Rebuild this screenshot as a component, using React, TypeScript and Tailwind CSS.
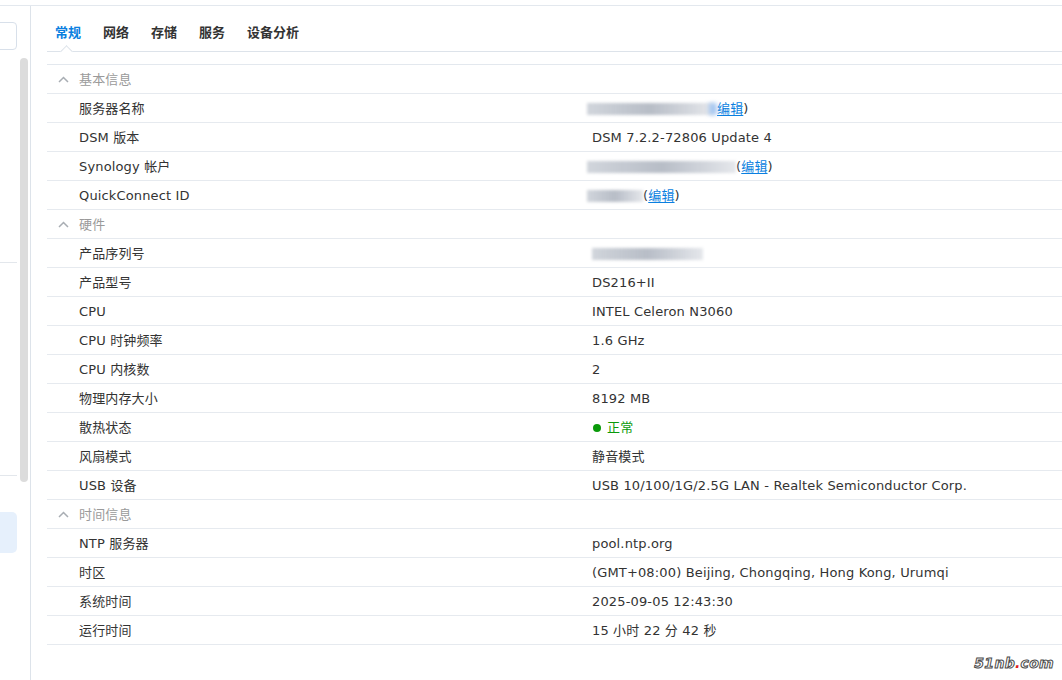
import React from 'react'

type Row = {
  label: string
  value?: React.ReactNode
}

type Section = {
  title: string
  rows: Row[]
}

function Blur({ w, className = '' }: { w: number; className?: string }) {
  return (
    <span
      className={`inline-block h-[12px] align-middle bg-gradient-to-r from-gray-300 via-gray-400/70 to-gray-200 blur-[1.5px] ${className}`}
      style={{ width: w }}
    />
  )
}

function Edit({ open = true }: { open?: boolean }) {
  return (
    <span>
      {open && '('}
      <span className="text-[#0a7fe0] underline underline-offset-2">编辑</span>)
    </span>
  )
}

const sections: Section[] = [
  {
    title: '基本信息',
    rows: [
      {
        label: '服务器名称',
        value: (
          <span className="flex items-center -ml-[5px]">
            <Blur w={126} />
            <span className="inline-block w-[8px] h-[12px] bg-[#a8c8f0] blur-[2px] -ml-[4px]" />
            <Edit open={false} />
          </span>
        ),
      },
      { label: 'DSM 版本', value: 'DSM 7.2.2-72806 Update 4' },
      {
        label: 'Synology 帐户',
        value: (
          <span className="flex items-center -ml-[5px]">
            <Blur w={149} />
            <Edit />
          </span>
        ),
      },
      {
        label: 'QuickConnect ID',
        value: (
          <span className="flex items-center -ml-[5px]">
            <Blur w={56} />
            <Edit />
          </span>
        ),
      },
    ],
  },
  {
    title: '硬件',
    rows: [
      { label: '产品序列号', value: <Blur w={111} /> },
      { label: '产品型号', value: 'DS216+II' },
      { label: 'CPU', value: 'INTEL Celeron N3060' },
      { label: 'CPU 时钟频率', value: '1.6 GHz' },
      { label: 'CPU 内核数', value: '2' },
      { label: '物理内存大小', value: '8192 MB' },
      {
        label: '散热状态',
        value: (
          <span className="flex items-center gap-[6px] text-[#0a9a0a]">
            <span className="w-[8px] h-[8px] rounded-full bg-[#0a9a0a] ml-[1px]" />
            正常
          </span>
        ),
      },
      { label: '风扇模式', value: '静音模式' },
      { label: 'USB 设备', value: 'USB 10/100/1G/2.5G LAN - Realtek Semiconductor Corp.' },
    ],
  },
  {
    title: '时间信息',
    rows: [
      { label: 'NTP 服务器', value: 'pool.ntp.org' },
      { label: '时区', value: '(GMT+08:00) Beijing, Chongqing, Hong Kong, Urumqi' },
      { label: '系统时间', value: '2025-09-05 12:43:30' },
      { label: '运行时间', value: '15 小时 22 分 42 秒' },
    ],
  },
]

const tabs = ['常规', '网络', '存储', '服务', '设备分析']

function Chevron() {
  return (
    <svg width="11" height="7" viewBox="0 0 11 7" fill="none" className="ml-[11px] mr-[10px]">
      <path d="M1 6l4.5-4.5L10 6" stroke="#a8adb3" strokeWidth="1.5" />
    </svg>
  )
}

export default function App() {
  return (
    <div
      className="w-[1062px] h-[680px] overflow-hidden bg-white text-[#333] relative"
      style={{ fontFamily: '"DejaVu Sans", "Noto Sans CJK SC", sans-serif' }}
    >
      <div className="h-[6px] border-b border-[#e3e8ee]" />
      <div className="flex h-[674px]">
        {/* Left panel */}
        <div className="w-[31px] shrink-0 border-r border-[#dde3ea] relative">
          <div className="absolute left-[-6px] top-[16px] w-[23px] h-[28px] border border-[#d8e0ea] rounded-[4px]" />
          <div className="absolute left-[20px] top-[52px] w-[8px] h-[424px] rounded-[4px] bg-[#dcdcdc]" />
          <div className="absolute left-0 top-[256px] w-[17px] border-t border-[#e3e7ec]" />
          <div className="absolute left-0 top-[469px] w-[17px] border-t border-[#e3e7ec]" />
          <div className="absolute left-[-6px] top-[506px] w-[23px] h-[41px] rounded-[5px] bg-[#e6f0fc]" />
        </div>

        {/* Main */}
        <div className="flex-1 pl-[16px] min-w-0">
          <div className="relative h-[46px] border-b border-[#dde3ea] flex items-end gap-[22px] pl-[8px] pb-[9px] text-[13px] leading-[18px] font-bold">
            {tabs.map((t, i) => (
              <span key={t} className={i === 0 ? 'text-[#0a7fe0]' : 'text-[#333]'}>
                {t}
              </span>
            ))}
            <span className="absolute left-[15px] bottom-[-5px] w-[9px] h-[9px] rotate-45 bg-white border-l border-t border-[#dde3ea]" />
          </div>

          <div className="mt-[12px] border-t border-[#e3e8ee] text-[13px] tracking-[0.15px]">
            {sections.map((s) => (
              <div key={s.title}>
                <div className="h-[29px] pt-[1px] flex items-center border-b border-[#e6eaef] text-[#9a9a9a]">
                  <Chevron />
                  <span>{s.title}</span>
                </div>
                {s.rows.map((r) => (
                  <div key={r.label} className="h-[29px] pt-[2px] grid grid-cols-[545px_1fr] items-center border-b border-[#e6eaef]">
                    <span className="pl-[32px] whitespace-nowrap">{r.label}</span>
                    <span className="whitespace-nowrap flex items-center">{r.value}</span>
                  </div>
                ))}
              </div>
            ))}
          </div>
        </div>
      </div>

      {/* Watermark */}
      <div className="absolute right-[8px] bottom-[6px] text-[14px] font-bold italic text-white tracking-[0.3px] [-webkit-text-stroke:1px_#4a4a4a] [font-family:'DejaVu_Sans',sans-serif]">
        51nb<span className="text-[#e02020] [-webkit-text-stroke:0px]">.</span>com
      </div>
    </div>
  )
}
